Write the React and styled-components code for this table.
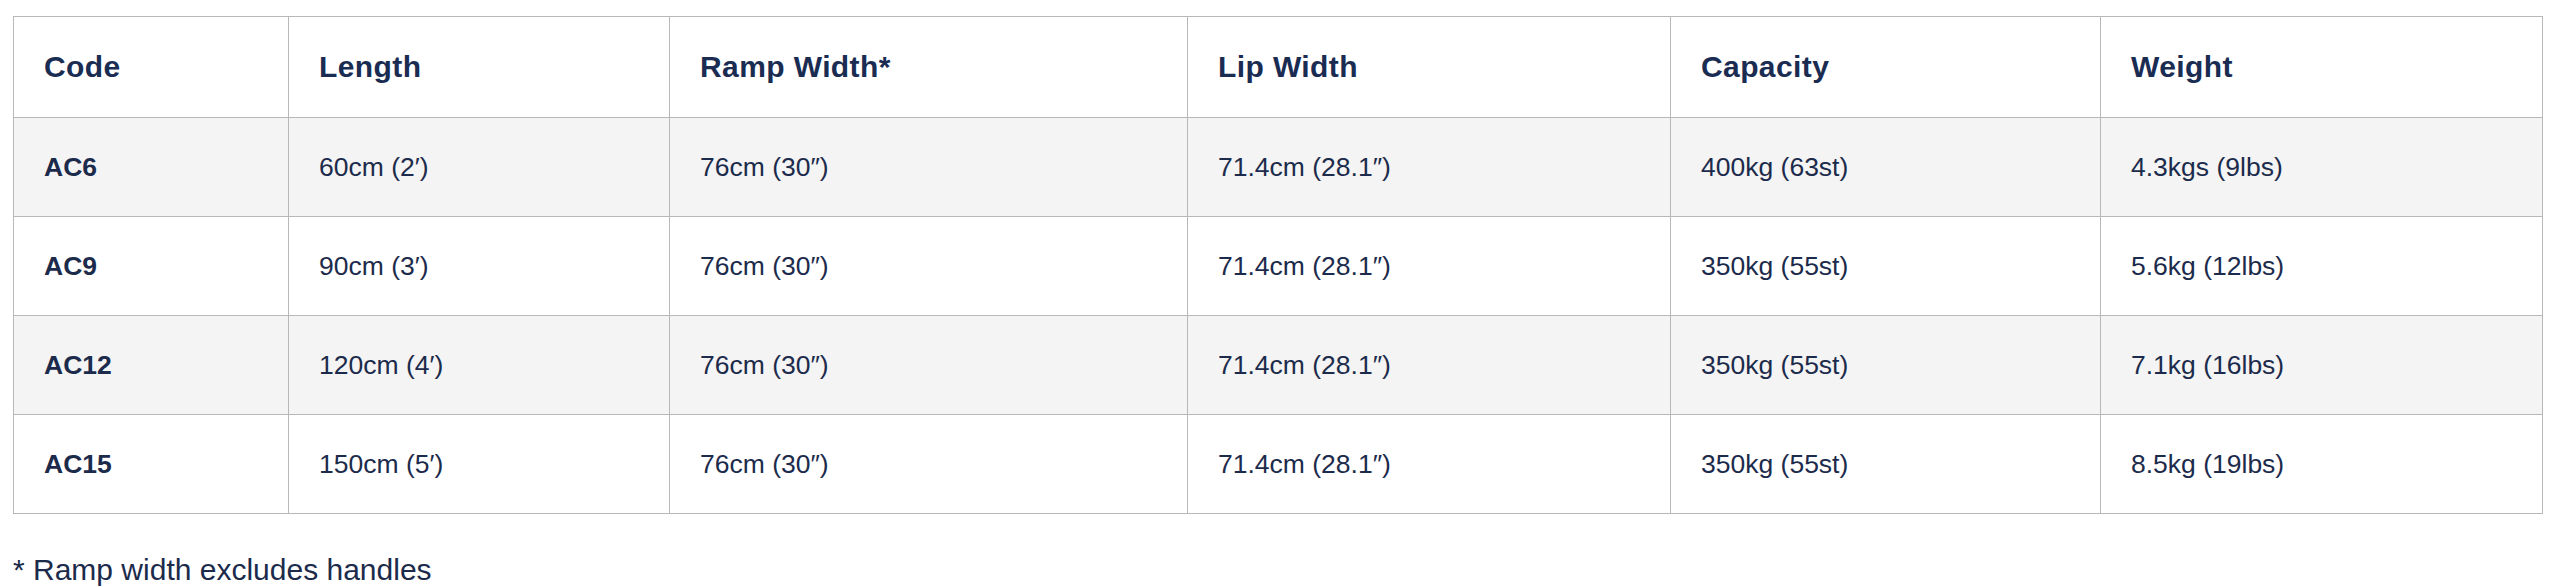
import React from 'react';
import styled, { createGlobalStyle } from 'styled-components';

const GlobalStyle = createGlobalStyle`
  html, body {
    margin: 0;
    padding: 0;
    background: #ffffff;
  }
  body {
    font-family: "Liberation Sans", Arial, Helvetica, sans-serif;
    color: #1c2b4b;
  }
`;

const Page = styled.div`
  padding: 16px 18px 0 13px;
`;

const SpecTable = styled.table`
  width: 2529px;
  border-collapse: collapse;
  table-layout: fixed;
  border: 1px solid #b8b8b8;
`;

const HeadCell = styled.th`
  height: 100px;
  padding: 0 30px;
  text-align: left;
  font-size: 30px;
  font-weight: 700;
  letter-spacing: 0.4px;
  color: #1a2c52;
  border: 1px solid #b8b8b8;
  background: #ffffff;
`;

const Row = styled.tr`
  background: ${props => (props.$shaded ? '#f4f4f4' : '#ffffff')};
`;

const Cell = styled.td`
  height: 98px;
  padding: 0 30px;
  font-size: 26.5px;
  font-weight: ${props => (props.$bold ? 700 : 400)};
  color: #1c2b4b;
  border: 1px solid #b8b8b8;
  white-space: nowrap;
`;

const Note = styled.p`
  margin: 39px 0 0 0;
  font-size: 30px;
  color: #1c2b4b;
`;

const columns = [
    { title: 'Code', width: 275 },
    { title: 'Length', width: 381 },
    { title: 'Ramp Width*', width: 518 },
    { title: 'Lip Width', width: 483 },
    { title: 'Capacity', width: 430 },
    { title: 'Weight', width: 442 },
];

const rows = [
    ['AC6', '60cm (2′)', '76cm (30″)', '71.4cm (28.1″)', '400kg (63st)', '4.3kgs (9lbs)'],
    ['AC9', '90cm (3′)', '76cm (30″)', '71.4cm (28.1″)', '350kg (55st)', '5.6kg (12lbs)'],
    ['AC12', '120cm (4′)', '76cm (30″)', '71.4cm (28.1″)', '350kg (55st)', '7.1kg (16lbs)'],
    ['AC15', '150cm (5′)', '76cm (30″)', '71.4cm (28.1″)', '350kg (55st)', '8.5kg (19lbs)'],
];

const App = () => {
    return (
        <Page>
            <GlobalStyle />
            <SpecTable>
                <colgroup>
                    {columns.map(col => (
                        <col key={col.title} style={{ width: col.width }} />
                    ))}
                </colgroup>
                <thead>
                    <tr>
                        {columns.map(col => (
                            <HeadCell key={col.title}>{col.title}</HeadCell>
                        ))}
                    </tr>
                </thead>
                <tbody>
                    {rows.map((row, i) => (
                        <Row key={row[0]} $shaded={i % 2 === 0}>
                            {row.map((value, j) => (
                                <Cell key={j} $bold={j === 0}>{value}</Cell>
                            ))}
                        </Row>
                    ))}
                </tbody>
            </SpecTable>
            <Note>* Ramp width excludes handles</Note>
        </Page>
    );
};

export default App;
